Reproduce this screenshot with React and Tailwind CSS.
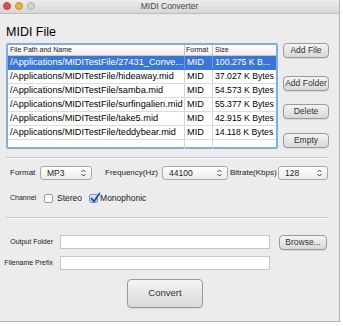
import React from "react";

const F = { fontFamily: '"Liberation Sans", Arial, sans-serif' };

function Btn({ children, className = "" }) {
  return (
    <div
      className={
        "flex items-center justify-center whitespace-nowrap rounded-[4px] border border-[#9a9a9a] bg-gradient-to-b from-[#f4f4f4] to-[#d9d9d9] text-[8.5px] text-[#333] shadow-[0_1px_0_rgba(0,0,0,0.08)] " +
        className
      }
    >
      {children}
    </div>
  );
}

function Arrows() {
  return (
    <svg width="5" height="8" viewBox="0 0 5 8">
      <path d="M0.5 3 L2.5 1 L4.5 3" fill="none" stroke="#444" strokeWidth="1" />
      <path d="M0.5 5 L2.5 7 L4.5 5" fill="none" stroke="#444" strokeWidth="1" />
    </svg>
  );
}

function Select({ value, w }) {
  return (
    <div
      className={
        "flex h-[14px] items-center justify-between rounded-[3px] border border-[#a8a8a8] bg-gradient-to-b from-[#ffffff] to-[#ececec] pl-[6px] pr-[5px] text-[8.5px] text-[#222] " +
        w
      }
    >
      <span>{value}</span>
      <Arrows />
    </div>
  );
}

const rows = [
  ["/Applications/MIDITestFile/27431_Conve...", "MID", "100.275 K B..."],
  ["/Applications/MIDITestFile/hideaway.mid", "MID", "37.027 K Bytes"],
  ["/Applications/MIDITestFile/samba.mid", "MID", "54.573 K Bytes"],
  ["/Applications/MIDITestFile/surfingalien.mid", "MID", "55.377 K Bytes"],
  ["/Applications/MIDITestFile/take5.mid", "MID", "42.915 K Bytes"],
  ["/Applications/MIDITestFile/teddybear.mid", "MID", "14.118 K Bytes"],
];

export default function App() {
  return (
    <div className="h-[326px] w-[343px] bg-white" style={F}>
      <div className="flex h-[322px] w-[340px] flex-col border-r border-b border-[#b5b5b5] bg-[#ececec]">
        {/* title bar */}
        <div className="relative flex h-[14px] items-center justify-center bg-gradient-to-b from-[#ececec] to-[#d6d6d6] border-b border-[#bcbcbc]">
          <div className="absolute left-[3px] top-[2px] flex gap-[4px]">
            <div className="h-[8px] w-[8px] rounded-full bg-[#e0534d] border border-[#b8433e]" />
            <div className="h-[8px] w-[8px] rounded-full bg-[#e7b43c] border border-[#c2912a]" />
            <div className="h-[8px] w-[8px] rounded-full bg-[#d3d3d3] border border-[#b0b0b0]" />
          </div>
          <span className="text-[8.5px] text-[#4a4a4a]">MIDI Converter</span>
        </div>

        <div className="ml-[6px] mt-[10px] h-[17px] text-[12.5px] leading-[17px] text-[#000]">MIDI File</div>

        {/* table + buttons */}
        <div className="mt-[2px] flex">
          <div className="ml-[6px] h-[106px] w-[272px] rounded-[2px] border-2 border-[#82ace6] bg-white">
            <div className="flex h-[11px] border-b border-[#c8c8c8] bg-gradient-to-b from-white to-[#f0f0f0] text-[7px] leading-[10px] text-[#222]">
              <div className="w-[177px] border-r border-[#c8c8c8] pl-[2px]">File Path and Name</div>
              <div className="w-[28px] border-r border-[#c8c8c8] pl-[1px]">Format</div>
              <div className="flex-1 pl-[2px]">Size</div>
            </div>
            {rows.map((r, i) => (
              <div
                key={i}
                className={
                  "flex h-[14px] border-b text-[9.2px] leading-[13px] " +
                  (i === 0
                    ? "bg-[#3a76d5] text-white border-[#3a76d5]"
                    : "text-[#000] border-[#dcdcdc]")
                }
              >
                <div className={"w-[177px] overflow-hidden whitespace-nowrap pl-[2px] border-r " + (i === 0 ? "border-[#6b97de]" : "border-[#d4d4d4]")}>{r[0]}</div>
                <div className={"w-[28px] border-r pl-[2px] " + (i === 0 ? "border-[#6b97de]" : "border-[#d4d4d4]")}>{r[1]}</div>
                <div className="flex-1 overflow-hidden whitespace-nowrap pl-[2px] text-[8.7px]">{r[2]}</div>
              </div>
            ))}
            <div className="flex h-[9px]">
              <div className="w-[177px] border-r border-[#d4d4d4]" />
              <div className="w-[28px] border-r border-[#d4d4d4]" />
            </div>
          </div>
          <div className="ml-[5px] flex flex-col">
            <Btn className="h-[15px] w-[46px]">Add File</Btn>
            <Btn className="mt-[18px] h-[15px] w-[46px]">Add Folder</Btn>
            <Btn className="mt-[13px] h-[15px] w-[46px]">Delete</Btn>
            <Btn className="mt-[14px] h-[15px] w-[46px]">Empty</Btn>
          </div>
        </div>

        <div className="ml-[6px] mt-[8px] h-[2px] w-[322px] border-t border-b border-t-[#c4c4c4] border-b-[#fafafa]" />

        {/* format row */}
        <div className="ml-[10px] mt-[7px] flex items-center text-[8px] text-[#222]">
          <span className="w-[30px]">Format</span>
          <Select value="MP3" w="w-[52px]" />
          <span className="ml-[13px] w-[57px] whitespace-nowrap">Frequency(Hz)</span>
          <Select value="44100" w="w-[66px]" />
          <span className="ml-[2px] w-[48px] whitespace-nowrap">Bitrate(Kbps)</span>
          <Select value="128" w="w-[50px]" />
        </div>

        {/* channel */}
        <div className="ml-[10px] mt-[12px] flex items-center text-[7px] text-[#222]">
          <span className="w-[34px]">Channel</span>
          <div className="h-[9px] w-[9px] rounded-[2px] border border-[#9c9c9c] bg-white" />
          <span className="ml-[4px] text-[8.5px]">Stereo</span>
          <div className="relative ml-[7px] h-[9px] w-[9px] rounded-[2px] border border-[#7b94c4] bg-gradient-to-b from-[#dfe9f8] to-[#b6cbee]">
            <svg className="absolute -left-[1px] -top-[3px]" width="12" height="12" viewBox="0 0 12 12">
              <path d="M2.5 6.5 L5 9.5 L10.5 1.5" fill="none" stroke="#1e4fa8" strokeWidth="1.8" strokeLinecap="round" strokeLinejoin="round" />
            </svg>
          </div>
          <span className="ml-[2px] text-[8.5px]">Monophonic</span>
        </div>

        <div className="ml-[6px] mt-[12px] h-[2px] w-[322px] border-t border-b border-t-[#c4c4c4] border-b-[#fafafa]" />

        {/* output folder */}
        <div className="mt-[16px] flex items-center">
          <div className="w-[53px] whitespace-nowrap text-right text-[7px] text-[#222]">Output Folder</div>
          <div className="ml-[7px] h-[14px] w-[210px] border border-[#c6c6c6] bg-white" />
          <Btn className="ml-[9px] h-[15px] w-[48px]">Browse...</Btn>
        </div>
        <div className="mt-[6px] flex items-center">
          <div className="w-[53px] whitespace-nowrap text-right text-[7px] text-[#222]">Filename Prefix</div>
          <div className="ml-[7px] h-[14px] w-[210px] border border-[#c6c6c6] bg-white" />
        </div>

        <div className="mt-[9px] flex">
          <Btn className="ml-[127px] h-[29px] w-[76px] text-[9.5px]">Convert</Btn>
        </div>
      </div>
    </div>
  );
}
